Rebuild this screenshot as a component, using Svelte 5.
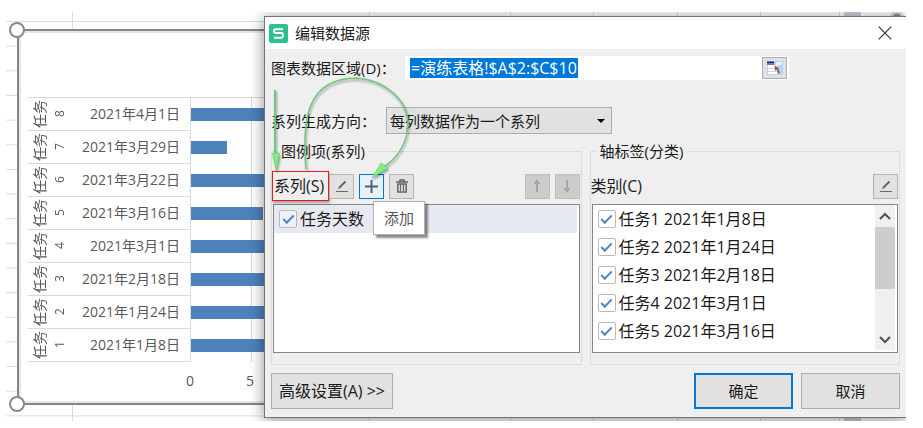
<script lang="ts">
  type ChartRow = { task: number; date: string; days: number };
  type Category = { name: string; checked: boolean };

  const DAY_WIDTH = 12;

  const rows: ChartRow[] = [
    { task: 8, date: '2021年4月1日', days: 10 },
    { task: 7, date: '2021年3月29日', days: 3 },
    { task: 6, date: '2021年3月22日', days: 8 },
    { task: 5, date: '2021年3月16日', days: 6 },
    { task: 4, date: '2021年3月1日', days: 14 },
    { task: 3, date: '2021年2月18日', days: 12 },
    { task: 2, date: '2021年1月24日', days: 20 },
    { task: 1, date: '2021年1月8日', days: 15 }
  ];

  let range = $state('=演练表格!$A$2:$C$10');
  let direction = $state('col');
  let seriesChecked = $state(true);
  let categories: Category[] = $state([
    { name: '任务1 2021年1月8日', checked: true },
    { name: '任务2 2021年1月24日', checked: true },
    { name: '任务3 2021年2月18日', checked: true },
    { name: '任务4 2021年3月1日', checked: true },
    { name: '任务5 2021年3月16日', checked: true },
    { name: '任务6 2021年3月22日', checked: true }
  ]);

  const rowLines = Array.from({ length: 17 }, (_, i) => 9.5 + i * 24.65);
  const columnLines = [66.5, 363.5, 504.5, 587.5, 671.5, 754.5, 833.5];
</script>

{#snippet pencil()}
  <svg width="16" height="16" viewBox="0 0 16 16" fill="none" stroke="#62666c">
    <path d="M5.500 9.500 11.500 3.500" stroke-width="2" />
    <path d="M4 11 5 8.500l1.500 1.500z" fill="#62666c" stroke="none" />
    <path d="M2 13.500h12" stroke-width="1" />
  </svg>
{/snippet}

<div class="sheet">
  <svg class="cells" width="100%" height="100%">
    {#each rowLines as y}
      <line x1="0" x2="100%" y1={y} y2={y} />
    {/each}
    {#each columnLines as x}
      <line x1={x} x2={x} y1="0" y2="100%" />
    {/each}
    <rect x="838" y="0" width="17" height="100%" fill="#c9cdda" />
    <circle cx="891" cy="6" r="6" fill="#8b8b8b" stroke="#ddd" stroke-width="3" />
  </svg>

  <div class="chart">
    <span class="handle top"></span>
    <span class="handle bottom"></span>
    <div class="plot">
      {#each rows as row}
        <div class="chart-row">
          <div class="axis-label">
            <div class="task"><span>任务</span><span class="num">{row.task}</span></div>
            <span class="date">{row.date}</span>
          </div>
          <div class="track">
            <div class="bar" style="width: {row.days * DAY_WIDTH}px"></div>
          </div>
        </div>
      {/each}
    </div>
    <div class="scale">
      <span>0</span>
      <span>5</span>
    </div>
  </div>

  <div class="dialog" role="dialog" aria-labelledby="dialog-title">
    <header>
      <svg width="19" height="19" viewBox="0 0 19 19">
        <rect width="19" height="19" rx="2" fill="#2cc18a" />
        <path d="M14 5.2H6.7Q5 5.2 5 7t1.700 1.900H12.300Q14 9 14 11.200T12.300 13.700H5" fill="none" stroke="#fff" stroke-width="2" />
      </svg>
      <h1 id="dialog-title">编辑数据源</h1>
      <button class="close" aria-label="关闭">
        <svg width="14" height="14" viewBox="0 0 14 14" stroke="#333" stroke-width="1.2">
          <path d="M.7.700 13.300 13.300M13.300.700.700 13.300" />
        </svg>
      </button>
    </header>

    <div class="body">
      <div class="field">
        <label class="range-label" for="range">图表数据区域(D)：</label>
        <div class="range-box">
          <input id="range" type="text" bind:value={range} />
          <button class="pick" aria-label="选择区域">
            <svg width="16" height="14" viewBox="0 0 16 14">
              <rect width="16" height="14" fill="#b5d2fb" />
              <rect x="1" y="4" width="9" height="9" fill="#fff" />
              <rect x="9" y="1" width="6" height="3" fill="#e4effd" />
              <path d="M1 7.500h10M1 10.500h10" stroke="#c9d8ef" />
              <rect width="7" height="4" fill="#777a98" />
              <rect y="1" width="7" height="1" fill="#1d1f96" />
              <path d="M7.500 4l.5 6 1.500-1.500 2 3.500 1.300-.8-1.800-3.200h1.500z" fill="#b5502f" />
              <path d="M10.500 9l1.800 3.300" stroke="#666" stroke-width="1.500" />
            </svg>
          </button>
        </div>
      </div>

      <div class="field direction">
        <label class="direction-label" for="direction">系列生成方向：</label>
        <div class="select-box">
          <select id="direction" bind:value={direction}>
            <option value="col">每列数据作为一个系列</option>
            <option value="row">每行数据作为一个系列</option>
          </select>
          <svg width="8" height="4" viewBox="0 0 8 4"><path d="M0 0h8L4 4z" /></svg>
        </div>
      </div>

      <div class="groups">
        <fieldset>
          <legend>图例项(系列)</legend>
          <div class="toolbar">
            <span class="marked">系列(S)</span>
            <button class="tool edit" aria-label="编辑">{@render pencil()}</button>
            <div class="add">
              <button class="tool active" aria-label="添加">
                <svg width="13" height="13" viewBox="0 0 13 13" stroke="#5c6066" stroke-width="2">
                  <path d="M6.500 0v13M0 6.500h13" />
                </svg>
              </button>
              <div class="tooltip" role="tooltip">添加</div>
            </div>
            <button class="tool" aria-label="删除">
              <svg width="12" height="14" viewBox="0 0 12 14" fill="none" stroke="#62666c">
                <path d="M0 3h12M4 2.500V1h4v1.500" stroke-width="1.600" />
                <path d="M1.800 5v8h8.400V5z" stroke-width="1.500" />
                <path d="M4.500 5v7M7.500 5v7" stroke-width="1.200" />
              </svg>
            </button>
            <span class="spacer"></span>
            <button class="tool" disabled aria-label="上移">
              <svg width="10" height="14" viewBox="0 0 10 14" fill="#a6a6a6">
                <path d="M5 0l3.500 5H6v8H4V5H1.500z" />
              </svg>
            </button>
            <button class="tool" disabled aria-label="下移">
              <svg width="10" height="14" viewBox="0 0 10 14" fill="#a6a6a6">
                <path d="M5 14L1.500 9H4V1h2v8h2.500z" />
              </svg>
            </button>
          </div>
          <div class="list">
            <div class="items">
              <label class="item selected">
                <input type="checkbox" bind:checked={seriesChecked} />
                <span>任务天数</span>
              </label>
            </div>
          </div>
        </fieldset>

        <fieldset>
          <legend>轴标签(分类)</legend>
          <div class="toolbar">
            <span>类别(C)</span>
            <span class="spacer"></span>
            <button class="tool" aria-label="编辑类别">{@render pencil()}</button>
          </div>
          <div class="list">
            <div class="items">
              {#each categories as category}
                <label class="item">
                  <input type="checkbox" bind:checked={category.checked} />
                  <span>{category.name}</span>
                </label>
              {/each}
            </div>
            <div class="scrollbar">
              <svg width="20" height="22" viewBox="0 0 20 22"><path d="M5 14l5-5 5 5" /></svg>
              <div class="thumb"></div>
              <svg width="20" height="22" viewBox="0 0 20 22"><path d="M5 9l5 5 5-5" /></svg>
            </div>
          </div>
        </fieldset>
      </div>

      <footer>
        <button class="btn advanced">高级设置(A) &gt;&gt;</button>
        <span class="spacer"></span>
        <button class="btn primary">确定</button>
        <button class="btn">取消</button>
      </footer>
    </div>

    <!-- hint arrows over the dialog -->
    <svg class="arrows" width="160" height="190" viewBox="264 16 160 190" fill="none">
      <path d="M275 90V156" stroke="#6fc77a" stroke-width="2" />
      <path d="M272.500 153h7L276.500 171z" fill="#7df07d" stroke="#5cb868" stroke-width=".5" />
      <path d="M306 169C302 120 306 78 357 78C385 80 407 100 408 122C408 142 398 158 382 168" stroke="#6fc77a" stroke-width="1.500" />
      <path d="M372 178L381 163L388 168z" fill="#7df07d" stroke="#5cb868" stroke-width=".5" />
    </svg>
  </div>
</div>

<style>
  :global(body) {
    margin: 0;
    background: #fff;
    font-family: "Open Sans", "Noto Sans CJK SC", sans-serif;
    font-size: 15px;
    line-height: 20px;
    color: #1a1a1a;
  }

  button,
  input,
  select {
    font: inherit;
    color: inherit;
    box-sizing: border-box;
    margin: 0;
  }

  svg {
    display: block;
    flex: none;
  }

  .sheet {
    position: relative;
    overflow: hidden;
    margin: 12px 17px 7px 6px;
    padding: 4px 0 3px 258px;
  }

  .cells {
    position: absolute;
    inset: 0;
  }

  .cells line {
    stroke: #d3dcee;
  }

  .chart {
    position: absolute;
    top: 17px;
    bottom: 16px;
    left: 11px;
    right: 12px;
    box-sizing: border-box;
    border: 2px solid #858785;
    box-shadow: inset 0 0 0 2px #e6e6e6;
    background: #fff;
    padding: 66px 0 0 9px;
    color: #595959;
    font-size: 14px;
  }

  .handle {
    position: absolute;
    left: -10px;
    width: 12px;
    height: 12px;
    border: 2px solid #8a8a8a;
    border-radius: 50%;
    background: #fff;
  }

  .handle.top {
    top: -9px;
  }

  .handle.bottom {
    bottom: -9px;
  }

  .plot {
    border-top: 1px solid #d9d9d9;
  }

  .chart-row {
    display: flex;
    height: 33px;
  }

  .axis-label {
    display: flex;
    align-items: center;
    justify-content: space-between;
    box-sizing: border-box;
    width: 163px;
    padding: 0 10px 0 2px;
    border-right: 1px solid #d9d9d9;
    border-bottom: 1px solid #d9d9d9;
  }

  .task {
    display: flex;
    align-items: center;
    writing-mode: vertical-rl;
    text-orientation: sideways;
    transform: rotate(180deg);
    flex-direction: column;
  }

  .task .num {
    font-size: 12px;
    line-height: 20px;
  }

  .track {
    display: flex;
    align-items: center;
    flex: 1;
    background: linear-gradient(#d9d9d9, #d9d9d9) 60px 0 / 1px 100% no-repeat;
  }

  .bar {
    height: 13px;
    background: #4f81bd;
  }

  .scale {
    display: flex;
    margin: 9px 0 0 132px;
  }

  .scale span {
    width: 60px;
    text-align: center;
  }

  .dialog {
    position: relative;
    border: 1px solid #747474;
    border-right: 0;
    background: #efefef;
    box-shadow: 0 2px 14px rgba(0, 0, 0, 0.45);
  }

  header {
    display: flex;
    align-items: center;
    gap: 7px;
    height: 32px;
    padding: 0 7px 0 4px;
    background: #fff;
  }

  h1 {
    flex: 1;
    margin: 0;
    font-size: 15px;
    font-weight: 400;
  }

  .close {
    padding: 0 7px;
    border: 0;
    background: none;
  }

  .body {
    padding: 7px 6px 8px;
  }

  .field {
    display: flex;
    align-items: center;
  }

  .field label {
    white-space: nowrap;
  }

  .range-label {
    width: 134px;
  }

  .range-box {
    display: flex;
    align-items: center;
    justify-content: space-between;
    box-sizing: border-box;
    flex: 0 1 384px;
    height: 24px;
    padding: 0 2px 0 5px;
    background: #fff;
  }

  .range-box input {
    field-sizing: content;
    height: 20px;
    padding: 0 1px;
    border: 0;
    background: #0078d7;
    color: #fff;
    font-size: 16px;
  }

  .pick {
    display: grid;
    place-items: center;
    width: 25px;
    height: 22px;
    padding: 0;
    border: 1px solid #adadad;
    background: #e1e1e1;
  }

  .direction {
    margin: 27px 0 7px;
  }

  .direction-label {
    width: 115px;
  }

  .select-box {
    display: flex;
    align-items: center;
    position: relative;
    flex: 0 1 226px;
  }

  .select-box svg {
    position: absolute;
    right: 7px;
    pointer-events: none;
  }

  select {
    appearance: none;
    width: 100%;
    height: 27px;
    padding: 0 20px 0 3px;
    border: 1px solid #adadad;
    border-radius: 0;
    background: #e1e1e1;
  }

  .groups {
    display: grid;
    grid-template-columns: 1fr 1fr;
    gap: 8px;
  }

  fieldset {
    min-width: 0;
    margin: 0;
    padding: 10px 1px 11px 0;
    border: 1px solid #dcdcdc;
  }

  legend {
    margin-left: 5px;
    padding: 0 4px;
  }

  .toolbar {
    display: flex;
    align-items: center;
    gap: 5px;
    height: 30px;
    margin-bottom: 3px;
    font-size: 16px;
  }

  .marked {
    box-sizing: border-box;
    width: 57px;
    height: 30px;
    padding: 4px 0 0 1px;
    border: 1px solid #f01818;
    box-shadow: 1px 2px 3px rgba(0, 0, 0, 0.35);
    white-space: nowrap;
  }

  .spacer {
    flex: 1;
  }

  .tool {
    display: grid;
    place-items: center;
    flex: none;
    width: 25px;
    height: 25px;
    padding: 0;
    border: 1px solid #b4b4b4;
    background: #e1e1e1;
  }

  .tool.edit {
    margin-left: -5px;
  }

  .tool.active {
    border-color: #0078d7;
    background: #e5f1fb;
  }

  .tool:disabled {
    border-color: #bfbfbf;
    background: #ccc;
  }

  .add {
    position: relative;
  }

  .tooltip {
    position: absolute;
    z-index: 2;
    top: 27px;
    left: 14px;
    padding: 6px 10px;
    border: 1px solid #b0b0b0;
    background: #fff;
    box-shadow: 3px 3px 2px rgba(0, 0, 0, 0.45);
    color: #575757;
    font-size: 15px;
    white-space: nowrap;
  }

  .list {
    display: flex;
    box-sizing: border-box;
    height: 149px;
    margin-left: 1px;
    padding: 0 2px 2px 0;
    border: 1px solid #828790;
    background: #fff;
    overflow: hidden;
  }

  .items {
    flex: 1;
    overflow: hidden;
  }

  .item {
    display: flex;
    align-items: center;
    gap: 3px;
    height: 28px;
    padding-left: 5px;
    font-size: 16px;
    white-space: nowrap;
  }

  .item.selected {
    background: #e6eaf0;
  }

  .item input {
    display: grid;
    place-items: center;
    appearance: none;
    flex: none;
    width: 18px;
    height: 18px;
    border: 1px solid #b9b9b9;
    border-radius: 2px;
    background: #fff;
  }

  .item.selected input {
    background: #edf2fa;
  }

  .item input:checked::after {
    content: "";
    width: 9px;
    height: 4px;
    margin-bottom: 3px;
    border: solid #5583cc;
    border-width: 0 0 2px 2px;
    transform: rotate(-45deg);
  }

  .scrollbar {
    display: flex;
    flex-direction: column;
    width: 20px;
    background: #f0f0f0;
  }

  .scrollbar path {
    fill: none;
    stroke: #505050;
    stroke-width: 2;
  }

  .thumb {
    height: 62px;
    margin-bottom: auto;
    background: #cdcdcd;
  }

  footer {
    display: flex;
    gap: 8px;
    margin-top: 8px;
  }

  .btn {
    width: 99px;
    height: 36px;
    padding: 0;
    border: 1px solid #adadad;
    background: #e1e1e1;
  }

  .btn.advanced {
    width: 122px;
    font-size: 16px;
  }

  .btn.primary {
    border: 2px solid #0078d7;
  }

  .arrows {
    position: absolute;
    top: -1px;
    left: -1px;
    pointer-events: none;
    filter: drop-shadow(1px 2px 1px rgba(0, 0, 0, 0.35));
  }
</style>
